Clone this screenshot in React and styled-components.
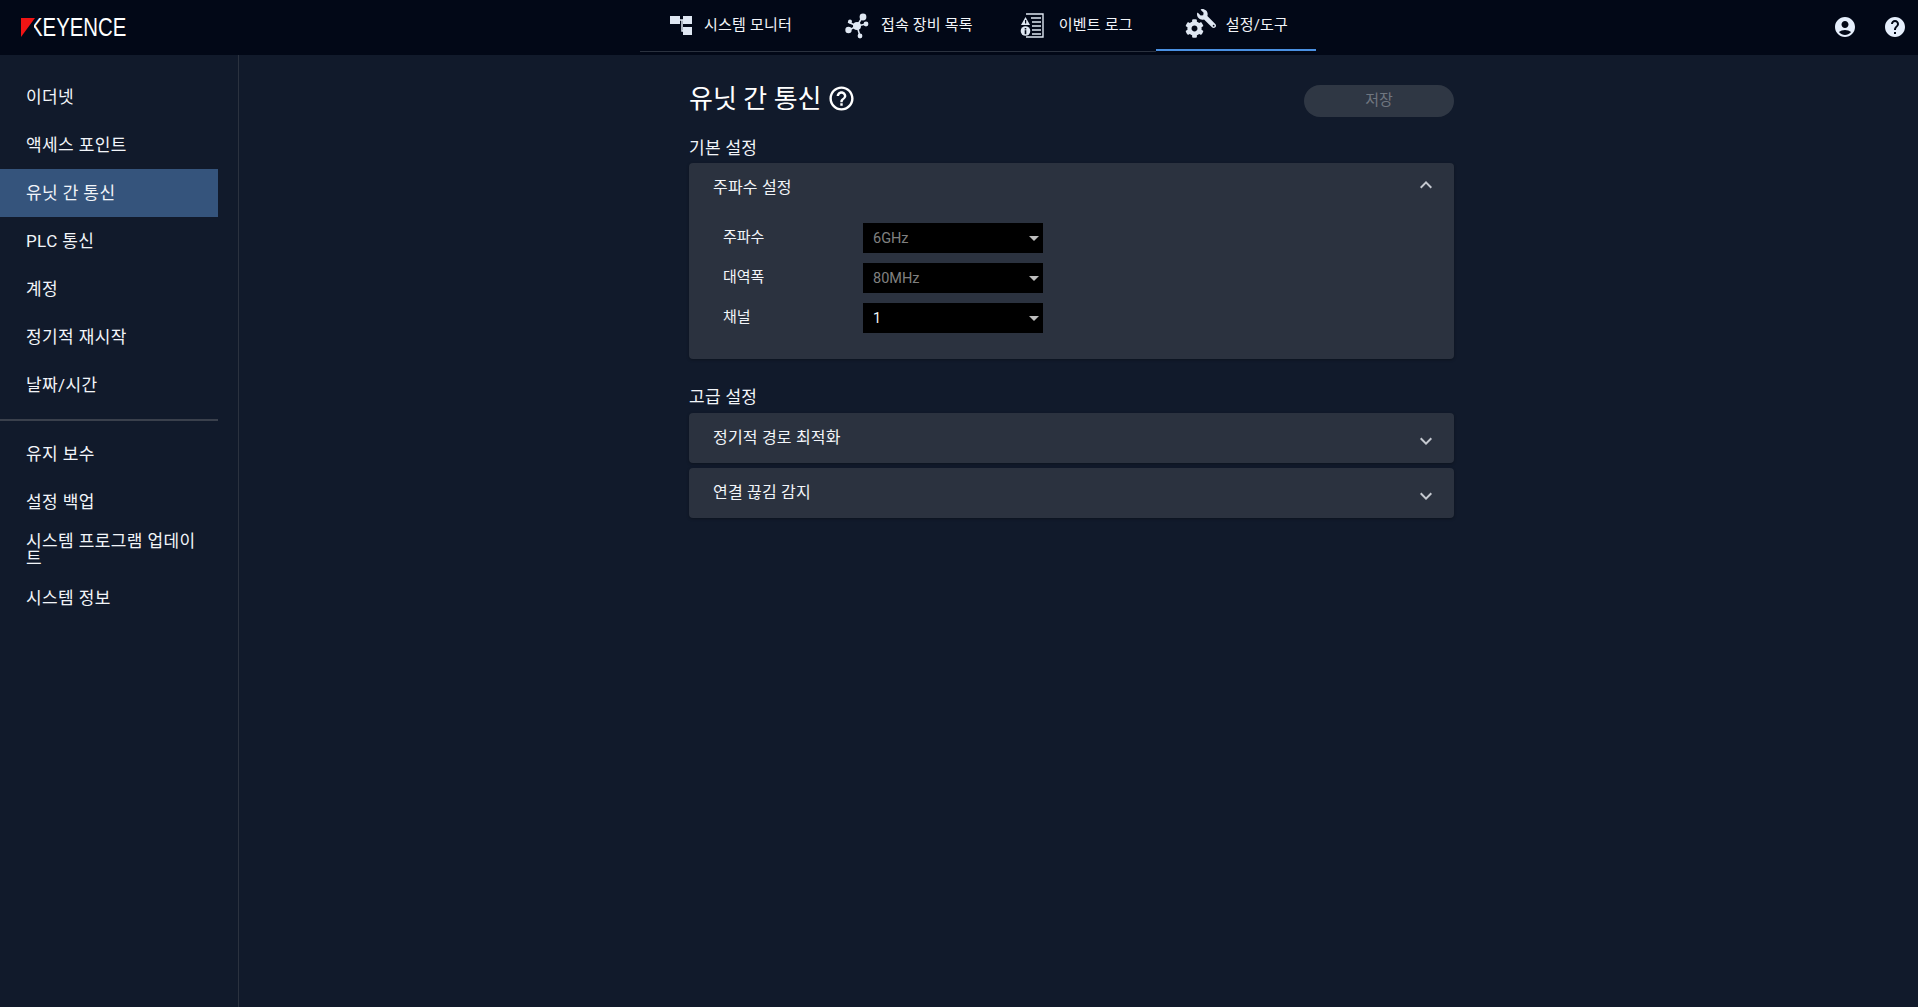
import React from 'react';
import styled, { createGlobalStyle } from 'styled-components';
import { MdAccountCircle, MdHelp, MdHelpOutline, MdExpandMore, MdExpandLess } from 'react-icons/md';
import { FaCog, FaWrench } from 'react-icons/fa';

const FONT = `Roboto, "Noto Sans CJK KR", sans-serif`;

const GlobalStyle = createGlobalStyle`
    html, body {
        margin: 0;
        padding: 0;
        height: 100%;
        background: #111a2b;
        font-family: ${FONT};
        overflow: hidden;
    }
    * { box-sizing: border-box; }
`;

const MonitorIcon = () => (
    <svg width="22" height="20" viewBox="0 0 22 20">
        <path d="M10 4h7M12 4v11h5" stroke="#dfe7f2" strokeWidth="1.5" fill="none" />
        <rect x="0" y="0" width="10" height="8" fill="#dfe7f2" />
        <rect x="13" y="0" width="9" height="8" fill="#dfe7f2" />
        <rect x="13" y="11" width="9" height="8" fill="#dfe7f2" />
    </svg>
);

const NetworkIcon = () => (
    <svg width="24" height="26" viewBox="0 0 24 26">
        <path d="M12 13L18 3M12 13L4 17M12 13L3 9M12 13L21 11M12 13L15 23" stroke="#dfe7f2" strokeWidth="1.6" />
        <circle cx="12" cy="13" r="4" fill="#dfe7f2" />
        <circle cx="18" cy="4" r="3.4" fill="#dfe7f2" />
        <circle cx="3.5" cy="17" r="3.2" fill="#dfe7f2" />
        <circle cx="5" cy="8.5" r="2" fill="#dfe7f2" />
        <circle cx="21" cy="11" r="2.4" fill="#dfe7f2" />
        <circle cx="15" cy="23" r="2.4" fill="#dfe7f2" />
    </svg>
);

const LogIcon = () => (
    <svg width="24" height="25" viewBox="0 0 24 25">
        <path d="M6 1h17v23H6" stroke="#dfe7f2" strokeWidth="1.4" fill="none" />
        <path d="M11 5h10M12 9h9M12 13h9M12 17h9M12 21h9" stroke="#dfe7f2" strokeWidth="1.4" />
        <path d="M5.5 4L10 12H1z" fill="#dfe7f2" />
        <rect x="5" y="7" width="1.2" height="3.5" fill="#020817" />
        <circle cx="5.5" cy="18" r="4.8" fill="#dfe7f2" />
        <rect x="4.7" y="15" width="1.6" height="1.5" fill="#020817" />
        <rect x="4.7" y="17.2" width="1.6" height="4" fill="#020817" />
    </svg>
);

const ToolsIcon = () => (
    <ToolsWrap>
        <FaWrench size={19} />
        <FaCog size={19} />
    </ToolsWrap>
);

const SIDE_TOP = ['이더넷', '액세스 포인트', '유닛 간 통신', 'PLC 통신', '계정', '정기적 재시작', '날짜/시간'];
const SIDE_BOTTOM = ['유지 보수', '설정 백업', '시스템 프로그램 업데이트', '시스템 정보'];

const TABS = [
    { label: '시스템 모니터', icon: <MonitorIcon />, gap: 12, pad: '0 26px 0 30px' },
    { label: '접속 장비 목록', icon: <NetworkIcon />, gap: 12, pad: '0 20px 0 27px' },
    { label: '이벤트 로그', icon: <LogIcon />, gap: 15, pad: '0 23px 0 27px' },
    { label: '설정/도구', icon: <ToolsIcon />, gap: 10, pad: '0 28px 0 29px', active: true },
];

const FIELDS = [
    { label: '주파수', value: '6GHz', muted: true },
    { label: '대역폭', value: '80MHz', muted: true },
    { label: '채널', value: '1' },
];

const App = () => {
    return (
        <Page>
            <GlobalStyle />
            <Header>
                <Logo>
                    <LogoMark width="14" height="19" viewBox="0 0 14 19">
                        {/* hides the stem of the K, the mark stands in for it */}
                        <rect x="7" y="0" width="6" height="19" fill="#020817" />
                        <polygon points="0,0 14,0 0,19" fill="#f01414" />
                    </LogoMark>
                    <LogoText>KEYENCE</LogoText>
                </Logo>
                <Tabs>
                    {TABS.map(t => (
                        <Tab key={t.label} $active={t.active} $gap={t.gap} $pad={t.pad}>
                            {t.icon}
                            <span>{t.label}</span>
                        </Tab>
                    ))}
                </Tabs>
                <HeaderActions>
                    <MdAccountCircle size={24} />
                    <MdHelp size={24} />
                </HeaderActions>
            </Header>
            <Body>
                <Sidebar>
                    {SIDE_TOP.map(s => (
                        <SideItem key={s} $active={s === '유닛 간 통신'}>{s}</SideItem>
                    ))}
                    <SideDivider />
                    {SIDE_BOTTOM.map(s => (
                        <SideItem key={s}>{s}</SideItem>
                    ))}
                </Sidebar>
                <Main>
                    <Content>
                        <TitleRow>
                            <Title>
                                유닛 간 통신
                                <MdHelpOutline size={29} />
                            </Title>
                            <SaveButton>저장</SaveButton>
                        </TitleRow>
                        <SectionLabel>기본 설정</SectionLabel>
                        <Card>
                            <CardHead>
                                <span>주파수 설정</span>
                                <MdExpandLess size={24} />
                            </CardHead>
                            <Fields>
                                {FIELDS.map(f => (
                                    <FieldRow key={f.label}>
                                        <FieldLabel>{f.label}</FieldLabel>
                                        <Select $muted={f.muted}>
                                            {f.value}
                                            <Caret />
                                        </Select>
                                    </FieldRow>
                                ))}
                            </Fields>
                        </Card>
                        <SectionLabel $advanced>고급 설정</SectionLabel>
                        <Card>
                            <CardHead $closed>
                                <span>정기적 경로 최적화</span>
                                <MdExpandMore size={24} />
                            </CardHead>
                        </Card>
                        <Card $next>
                            <CardHead $closed>
                                <span>연결 끊김 감지</span>
                                <MdExpandMore size={24} />
                            </CardHead>
                        </Card>
                    </Content>
                </Main>
            </Body>
        </Page>
    );
};

export default App;

const Page = styled.div`
    width: 100%;
    height: 100vh;
    display: flex;
    flex-direction: column;
    color: #f2f5f9;
`;

const Header = styled.header`
    height: 55px;
    flex: none;
    background: #020817;
    display: grid;
    grid-template-columns: 640px auto 1fr;
`;

const Logo = styled.div`
    display: flex;
    align-items: flex-start;
    padding: 18px 0 0 21px;
    overflow: hidden;
`;

const LogoMark = styled.svg`
    position: relative;
    z-index: 1;
`;

const LogoText = styled.span`
    font-family: "Liberation Sans", sans-serif;
    font-size: 25px;
    line-height: 19px;
    color: #fff;
    margin-left: -6px;
    transform: scaleX(0.815);
    transform-origin: left center;
`;

const Tabs = styled.nav`
    height: 52px;
    display: flex;
`;

const Tab = styled.div`
    position: relative;
    display: flex;
    align-items: center;
    gap: ${p => p.$gap}px;
    height: 52px;
    padding: ${p => p.$pad};
    font-size: 15px;
    letter-spacing: 0.2px;
    color: #f2f5f9;
    white-space: nowrap;
    border-bottom: 1px solid ${p => (p.$active ? 'transparent' : '#2b323f')};

    &::after {
        content: '';
        display: ${p => (p.$active ? 'block' : 'none')};
        position: absolute;
        left: 0;
        right: 0;
        bottom: 0;
        height: 2px;
        background: #4a90e2;
    }

    span {
        margin-top: -5px;
    }
`;

const ToolsWrap = styled.span`
    position: relative;
    display: block;
    width: 31px;
    height: 28px;
    color: #dfe7f2;

    svg:first-child {
        position: absolute;
        right: 0;
        top: 0;
        transform: scaleX(-1);
    }

    svg:last-child {
        position: absolute;
        left: 0;
        bottom: -1px;
    }
`;

const HeaderActions = styled.div`
    display: flex;
    justify-content: flex-end;
    align-items: center;
    gap: 26px;
    padding-right: 11px;
    height: 53px;
    color: #e6effc;
`;

const Body = styled.div`
    flex: 1;
    display: flex;
    min-height: 0;
`;

const Sidebar = styled.aside`
    width: 239px;
    flex: none;
    padding: 18px 20px 0 0;
    border-right: 1px solid #2b323f;
`;

const SideItem = styled.div`
    min-height: 48px;
    display: flex;
    align-items: center;
    padding: 0 14px 0 26px;
    font-size: 17px;
    letter-spacing: 0.4px;
    line-height: 17px;
    color: #f2f5f9;
    background: ${p => (p.$active ? '#35547c' : 'transparent')};
`;

const SideDivider = styled.div`
    height: 2px;
    margin: 10px 0 9px;
    background: #3a404c;
`;

const Main = styled.main`
    flex: 1;
    padding-left: 450px;
`;

const Content = styled.div`
    width: 765px;
`;

const TitleRow = styled.div`
    display: flex;
    justify-content: space-between;
    align-items: center;
    height: 32px;
    margin-top: 30px;
`;

const Title = styled.h1`
    margin: -10px 0 0;
    display: flex;
    align-items: center;
    gap: 5px;
    font-size: 26px;
    font-weight: 400;
    color: #fff;

    svg {
        margin-top: 4px;
    }
`;

const SaveButton = styled.div`
    width: 150px;
    height: 32px;
    border-radius: 16px;
    background: #2f3744;
    color: #6f7680;
    font-size: 15px;
    padding-bottom: 5px;
    display: flex;
    align-items: center;
    justify-content: center;
`;

const SectionLabel = styled.div`
    font-size: 17px;
    letter-spacing: 0.3px;
    line-height: 20px;
    margin-top: ${p => (p.$advanced ? '28px' : '21px')};
    margin-bottom: ${p => (p.$advanced ? '6px' : '5px')};
`;

const Card = styled.section`
    background: #2b323f;
    border-radius: 4px;
    margin-top: ${p => (p.$next ? '5px' : '0')};
    box-shadow: 0 1px 3px rgba(0, 0, 0, 0.3);
`;

const CardHead = styled.div`
    height: ${p => (p.$closed ? '50px' : '46px')};
    display: flex;
    align-items: center;
    justify-content: space-between;
    padding: 0 16px 0 24px;
    font-size: 16px;
    letter-spacing: 0.2px;

    span {
        margin-top: ${p => (p.$closed ? '-4px' : '-1px')};
    }

    svg {
        color: #c5c9d0;
        margin-top: ${p => (p.$closed ? '6px' : '-2px')};
    }
`;

const Fields = styled.div`
    display: flex;
    flex-direction: column;
    gap: 10px;
    padding: 14px 0 26px 34px;
`;

const FieldRow = styled.div`
    display: flex;
    align-items: center;
`;

const FieldLabel = styled.div`
    width: 140px;
    font-size: 15px;
    margin-top: -5px;
`;

const Select = styled.div`
    position: relative;
    width: 180px;
    height: 30px;
    background: #000;
    display: flex;
    align-items: center;
    padding-left: 10px;
    font-size: 14.5px;
    color: ${p => (p.$muted ? '#808080' : '#f2f5f9')};
`;

const Caret = styled.i`
    position: absolute;
    right: 4px;
    top: 13px;
    width: 0;
    height: 0;
    border-left: 5px solid transparent;
    border-right: 5px solid transparent;
    border-top: 5px solid #bdbdbd;
`;
